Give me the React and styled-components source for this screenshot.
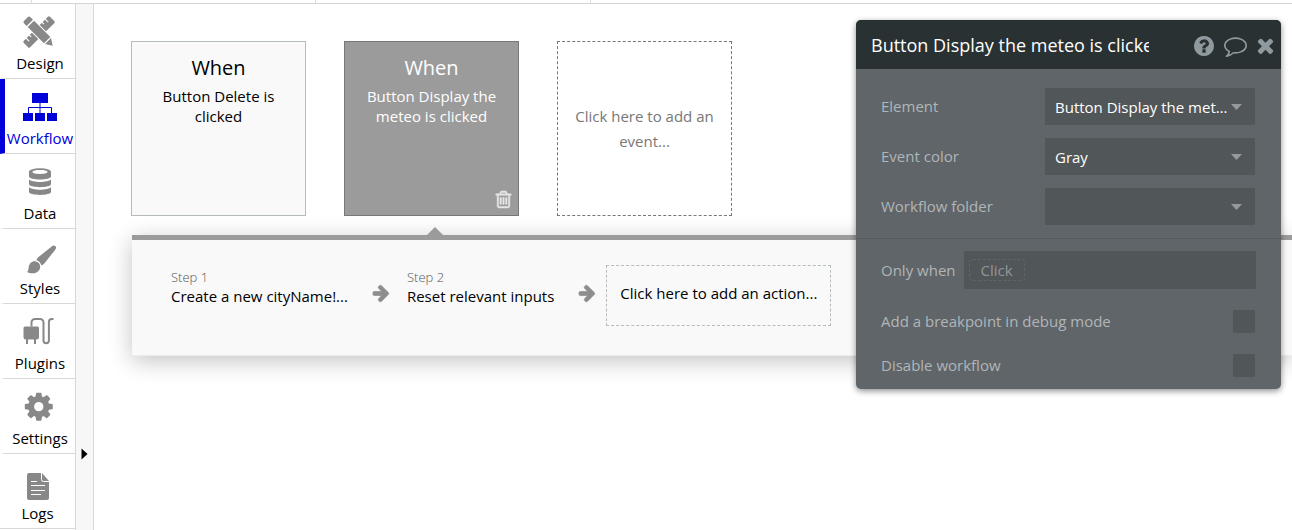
import React, { useState } from "react";
import styled, { createGlobalStyle, css } from "styled-components";

const GlobalStyle = createGlobalStyle`
  *, *::before, *::after { box-sizing: border-box; }
  body {
    margin: 0;
    background: #fff;
    color: #000;
    font-family: "Open Sans", "Noto Sans", sans-serif;
    font-size: 15px;
    line-height: 20px;
    overflow-x: hidden;
  }
  button, input, select { font: inherit; color: inherit; }
  svg { display: block; }
`;

/* ---------- icons ---------- */

const NavSvg = styled.svg`
  width: 40px;
  height: 36px;
  fill: currentColor;
`;

const DesignIcon = () => (
  <NavSvg viewBox="0 0 40 36" aria-hidden="true">
    <g transform="translate(19 16) rotate(-45)">
      <path d="M-17 -4.5h11.5v9h-11.5a1.5 1.5 0 0 1-1.5-1.5v-6a1.5 1.5 0 0 1 1.5-1.5z" />
      <path d="M5.5 -4.5h11.5a1.5 1.5 0 0 1 1.5 1.5v6a1.5 1.5 0 0 1-1.5 1.5h-11.5z" />
      <path
        d="M-13.500 -5v4.500M-9 -5v3M9 -5v3M13.500 -5v4.500"
        stroke="#fff"
        strokeWidth="1.1"
      />
    </g>
    <g transform="translate(19 16) rotate(45)">
      <path d="M-16.500 -4.500h3.500v9h-3.500a2 2 0 0 1-2-2v-5a2 2 0 0 1 2-2z" />
      <path d="M-11.500 -4.500h23v9h-23z" />
      <path d="M12.800 -4.200l6.500 4.200-6.500 4.200z" />
    </g>
  </NavSvg>
);

const WorkflowIcon = () => (
  <NavSvg viewBox="0 0 40 36" aria-hidden="true">
    <path d="M12 2h16v10H12zM3 22h10v8H3zM15 22h10v8H15zM27 22h10v8H27z" />
    <path d="M20 12v10M8.500 22v-5.500h23V22" fill="none" stroke="currentColor" />
  </NavSvg>
);

const DataIcon = () => (
  <NavSvg viewBox="0 0 40 36" aria-hidden="true">
    <path
      fillRule="evenodd"
      d="M9 6c0-5 22-5 22 0v4.500c0 4-22 4-22 0zM12.500 6c0 2.600 15 2.600 15 0s-15-2.600-15 0z"
    />
    <path d="M9 13.500c3 3.300 19 3.300 22 0v4.500c0 4.200-22 4.200-22 0z" />
    <path d="M9 21.200c3 3.300 19 3.300 22 0v4.600c0 4.200-22 4.200-22 0z" />
  </NavSvg>
);

const StylesIcon = () => (
  <NavSvg viewBox="0 0 40 36" aria-hidden="true">
    <path d="M35.500 5.200c1 1 .6 2.300-.3 3.500L24.500 22.300c-1 1.200-2 1.800-3.200 2-.8-2.600-2.400-4.200-4.800-5 .2-1.300.9-2.300 2-3.300L32 5.300c1.200-1 2.500-1.100 3.500-.1z" />
    <path d="M15.200 20.300c3.200.5 5 2.600 5 5.400 0 4-3.600 6.600-7.700 6.600-2.200 0-4.200-.5-5.500-1.400 1.600-.9 1.300-2.700 1.700-4.900.6-3.600 3-6 6.500-5.700z" />
  </NavSvg>
);

const PluginsIcon = () => (
  <NavSvg viewBox="0 0 40 36" aria-hidden="true">
    <path d="M5 10.500h12.500a1.500 1.500 0 0 1 1.500 1.500v9a2.500 2.500 0 0 1-2.500 2.500H16V28h-2v-4.500H8V28H6v-4.500a2.500 2.500 0 0 1-2.500-2.500v-9a1.500 1.500 0 0 1 1.500-1.500z" />
    <path
      d="M11.500 10.500V6.500a3.500 3.500 0 0 1 3.500-3.500h5a3.500 3.500 0 0 1 3.500 3.500v18a2.700 2.700 0 0 0 5.400 0V6a3 3 0 0 1 3-3h1.600"
      fill="none"
      stroke="currentColor"
      strokeWidth="2"
    />
  </NavSvg>
);

const SettingsIcon = () => (
  <NavSvg viewBox="0 0 40 36" aria-hidden="true">
    <g transform="translate(4.800 4) scale(0.0182)">
      <path
        fillRule="evenodd"
        d="M1024 640q0 106-75 181t-181 75-181-75-75-181 75-181 181-75 181 75 75 181zm512-109v222q0 12-8 23t-20 13l-185 28q-19 54-39 91 35 50 107 138 10 12 10 25t-9 23q-27 37-99 108t-94 71q-12 0-26-9l-138-108q-44 23-91 38-16 136-29 186-7 28-36 28h-222q-14 0-24.500-8.500t-11.500-21.500l-28-184q-49-16-90-37l-141 107q-10 9-25 9-14 0-25-11-126-114-165-168-7-10-7-23 0-12 8-23 15-21 51-66.500t54-70.500q-27-50-41-99l-183-27q-13-2-21-12.500t-8-23.500v-222q0-12 8-23t19-13l186-28q14-46 39-92-40-57-107-138-10-12-10-24 0-10 9-23 26-36 98.500-107.500t94.500-71.500q13 0 26 10l138 107q44-23 91-38 16-136 29-186 7-28 36-28h222q14 0 24.500 8.500t11.500 21.500l28 184q49 16 90 37l142-107q9-9 24-9 13 0 25 10 129 119 165 170 7 8 7 22 0 12-8 23-15 21-51 66.500t-54 70.500q26 50 41 98l183 28q13 2 21 12.500t8 23.500z"
      />
    </g>
  </NavSvg>
);

const LogsIcon = () => (
  <NavSvg viewBox="0 0 40 36" aria-hidden="true">
    <path d="M11 7h13l7 8v17a2 2 0 0 1-2 2H11a2 2 0 0 1-2-2V9a2 2 0 0 1 2-2z" />
    <path
      d="M23.500 7v6.500a2 2 0 0 0 2 2H31M13 15.500h6M13 19.500h14M13 24.500h14M13 28.500h10"
      fill="none"
      stroke="#fff"
    />
  </NavSvg>
);

const GlyphSvg = styled.svg`
  width: ${(p) => p.$size}px;
  height: ${(p) => p.$size}px;
  fill: currentColor;
  stroke: currentColor;
  stroke-width: ${(p) => p.$weight || 0};
  overflow: visible;
  flex: none;
`;

const glyphs = {
  help: "M1024 1376v-192q0-14-9-23t-23-9h-192q-14 0-23 9t-9 23v192q0 14 9 23t23 9h192q14 0 23-9t9-23zm256-672q0-88-55.5-163t-138.5-116-170-41q-243 0-371 213-15 24 8 42l132 100q7 6 19 6 16 0 25-12 53-68 86-92 34-24 86-24 48 0 85.500 26t37.500 59q0 38-20 61t-68 45q-63 28-115.500 86.500t-52.500 125.500v36q0 14 9 23t23 9h192q14 0 23-9t9-23q0-19 21.500-49.500t54.500-49.500q32-18 49-28.500t46-35 44.500-48 28-60.500 12.500-81zm384 192q0 209-103 385.500t-279.500 279.500-385.500 103-385.500-103-279.500-279.500-103-385.500 103-385.500 279.500-279.500 385.500-103 385.500 103 279.500 279.500 103 385.500z",
  comment:
    "M896 384q-204 0-381.500 69.500t-282 187.500-104.500 255q0 112 71.500 213.500t201.500 175.500l87 50-27 96q-24 91-70 172 152-63 275-171l43-38 57 6q69 8 130 8 204 0 381.500-69.500t282-187.500 104.500-255-104.500-255-282-187.500-381.500-69.500zm896 512q0 174-120 321.500t-326 233-450 85.500q-70 0-145-8-198 175-460 242-49 14-114 22h-5q-15 0-27-10.500t-16-27.500v-1q-3-4-.5-12t2-10 4.500-9.500l6-9 7-8.500 8-9q7-8 31-34.500t34.500-38 31-39.500 32.500-51 27-59 26-76q-157-89-247.500-220t-90.500-281q0-174 120-321.500t326-233 450-85.500 450 85.500 326 233 120 321.500z",
  close:
    "M1490 1322q0 40-28 68l-136 136q-28 28-68 28t-68-28l-294-294-294 294q-28 28-68 28t-68-28l-136-136q-28-28-28-68t28-68l294-294-294-294q-28-28-28-68t28-68l136-136q28-28 68-28t68 28l294 294 294-294q28-28 68-28t68 28l136 136q28 28 28 68t-28 68l-294 294 294 294q28 28 28 68z",
  trash:
    "M704 736v576q0 14-9 23t-23 9h-64q-14 0-23-9t-9-23v-576q0-14 9-23t23-9h64q14 0 23 9t9 23zm256 0v576q0 14-9 23t-23 9h-64q-14 0-23-9t-9-23v-576q0-14 9-23t23-9h64q14 0 23 9t9 23zm256 0v576q0 14-9 23t-23 9h-64q-14 0-23-9t-9-23v-576q0-14 9-23t23-9h64q14 0 23 9t9 23zm128 724v-948h-896v948q0 22 7 40.500t14.500 27 10.500 8.500h832q3 0 10.500-8.500t14.500-27 7-40.500zm-672-1076h448l-48-117q-7-9-17-11h-317q-10 2-17 11zm928 32v64q0 14-9 23t-23 9h-96v948q0 83-47 143.500t-113 60.500h-832q-66 0-113-58.500t-47-141.500v-952h-96q-14 0-23-9t-9-23v-64q0-14 9-23t23-9h309l70-167q15-37 54-63t79-26h320q40 0 79 26t54 63l70 167h309q14 0 23 9t9 23z",
  arrow:
    "M1600 960q0 54-37 91l-651 651q-39 37-91 37-51 0-90-37l-75-75q-38-38-38-91t38-91l293-293h-704q-52 0-84.500-37.500t-32.500-90.500v-128q0-53 32.500-90.500t84.500-37.500h704l-293-294q-38-36-38-90t38-90l75-75q38-38 90-38 53 0 91 38l651 651q37 35 37 90z",
};

const boxes = {
  help: "128 128 1536 1536",
  comment: "0 0 1792 1792",
  close: "302 238 1188 1316",
  trash: "192 128 1408 1536",
  arrow: "64 160 1536 1600",
};

const Glyph = ({ name, size, weight }) => (
  <GlyphSvg viewBox={boxes[name]} $size={size} $weight={weight} aria-hidden="true">
    <path d={glyphs[name]} />
  </GlyphSvg>
);

/* ---------- page frame ---------- */

const Page = styled.div`
  position: relative;
  display: flex;
  flex-direction: column;
  min-height: 100vh;
`;

const TopStrip = styled.header`
  display: flex;
  height: 4px;
  border-bottom: 1px solid #d5d5d5;
`;

const TopCell = styled.div`
  width: ${(p) => p.$width}px;
  border-right: 1px solid #dedede;
`;

const Columns = styled.div`
  display: flex;
  flex: 1;
`;

const Nav = styled.nav`
  flex: none;
  width: 76px;
  border-right: 1px solid #d8d8d8;
`;

const NavLink = styled.a`
  display: flex;
  flex-direction: column;
  align-items: center;
  height: 75px;
  padding-top: 12px;
  border-bottom: 1px solid #d8d8d8;
  border-left: ${(p) => (p.$flush ? "0" : "5px")} solid transparent;
  color: #000;
  text-decoration: none;
  white-space: nowrap;

  ${NavSvg} { color: #888; }

  ${(p) =>
    p.$active &&
    css`
      border-left-color: #0000d9;
      color: #0000d9;
      ${NavSvg} { color: #0000d9; }
    `}
`;

const NavText = styled.span`
  line-height: 22px;
`;

const Gutter = styled.div`
  display: flex;
  flex-direction: column;
  justify-content: flex-end;
  align-items: center;
  flex: none;
  width: 18px;
  padding-bottom: 70px;
  background: #f7f7f7;
  border-right: 1px solid #d8d8d8;
`;

const GutterButton = styled.button`
  padding: 0;
  border: 0;
  background: none;
`;

const Main = styled.main`
  flex: 1;
  min-width: 0;
  padding: 37px 0 0 37px;
  overflow: hidden;
`;

/* ---------- events ---------- */

const Events = styled.div`
  display: flex;
  gap: 38px;
`;

const EventCard = styled.section`
  display: flex;
  flex-direction: column;
  flex: none;
  width: 175px;
  height: 175px;
  padding: 12px 10px 7px;
  text-align: center;
  color: ${(p) => (p.$selected ? "#fff" : "#000")};
  background: ${(p) => (p.$selected ? "#9b9b9b" : "#f9f9f9")};
  border: 1px solid ${(p) => (p.$selected ? "#777" : "#b5bcc0")};
`;

const EventTitle = styled.h2`
  margin: 0 0 4px;
  font-size: 20px;
  line-height: 28px;
  font-weight: 400;
`;

const EventText = styled.p`
  margin: 0;
  padding: 0 10px;
  font-size: 15px;
`;

const TrashButton = styled.button`
  align-self: flex-end;
  margin-top: auto;
  margin-right: -4px;
  padding: 0;
  border: 0;
  background: none;
  color: #e6e6e6;
`;

const AddEvent = styled.button`
  flex: none;
  width: 175px;
  height: 175px;
  padding: 0 16px;
  border: 1px dashed #777;
  background: none;
  color: #777;
  line-height: 25px;
`;

/* ---------- actions ---------- */

const Actions = styled.section`
  position: relative;
  display: flex;
  align-items: flex-start;
  margin: 19px 0 0 1px;
  height: 121px;
  padding: 25px 32px;
  background: #f9f9f9;
  border-top: 5px solid #9b9b9b;
  border-bottom: 1px solid #ececec;
  box-shadow: 0 5px 22px rgba(0, 0, 0, 0.24);

  &::before {
    content: "";
    position: absolute;
    left: 295px;
    bottom: 100%;
    margin-bottom: 5px;
    border: 8px solid transparent;
    border-top: 0;
    border-bottom-color: #9b9b9b;
  }
`;

const Step = styled.div`
  flex: none;
  padding: 3px 0 0 7px;
`;

const StepNumber = styled.div`
  color: #555;
  font-size: 13px;
  line-height: 18px;
  font-weight: 300;
`;

const StepName = styled.div`
  white-space: nowrap;
`;

const StepArrow = styled.div`
  flex: none;
  padding: 20px 11px 0 24px;
  color: #8d8d8d;
`;

const AddAction = styled.button`
  flex: none;
  height: 61px;
  padding: 0 13px 6px;
  border: 1px dashed #b5bcc0;
  background: none;
  white-space: nowrap;
`;

/* ---------- property editor ---------- */

const Editor = styled.aside`
  position: absolute;
  top: 20px;
  right: 11px;
  width: 425px;
  border-radius: 5px;
  overflow: hidden;
  background: #5f6568;
  color: #b1b5b8;
  box-shadow: 0 2px 6px rgba(0, 0, 0, 0.45);
`;

const EditorHeader = styled.header`
  display: flex;
  align-items: center;
  height: 49px;
  padding: 2px 7px 0 15px;
  background: #293133;
  color: #8f9a9e;
`;

const TitleInput = styled.input`
  width: 278px;
  height: 30px;
  margin-right: auto;
  padding: 0 0 2px;
  border: 0;
  outline: 0;
  background: none;
  color: #fff;
  font-size: 18px;
`;

const HeaderIcons = styled.div`
  display: flex;
  align-items: center;
  gap: 10px;
`;

const IconButton = styled.button`
  padding: 0;
  border: 0;
  background: none;
`;

const Group = styled.div`
  display: flex;
  flex-direction: column;
  gap: ${(p) => p.$gap}px;
  padding: ${(p) => p.$pad};

  & + & { border-top: 1px solid #565b5e; }
`;

const Field = styled.div`
  display: flex;
  align-items: center;
  justify-content: space-between;
`;

const FieldLabel = styled.label`
  padding-bottom: 2px;
`;

const SelectBox = styled.div`
  position: relative;
  width: 210px;
`;

const Select = styled.select`
  appearance: none;
  display: block;
  width: 100%;
  height: 37px;
  padding: 1px 27px 0 10px;
  border: 0;
  border-radius: 1px;
  background: #515659;
  color: #fff;
  text-overflow: ellipsis;
`;

const Caret = styled.svg`
  position: absolute;
  right: 13px;
  top: 16px;
  width: 11px;
  height: 6px;
  fill: #96999b;
  pointer-events: none;
`;

const Expression = styled.div`
  display: flex;
  align-items: center;
  flex: 1;
  height: 38px;
  margin: 0 -1px 0 8px;
  padding: 0 5px;
  border-radius: 1px;
  background: #515659;
`;

const ExpressionChip = styled.button`
  height: 22px;
  padding: 0 11px;
  border: 1px dashed #5f6568;
  border-radius: 4px;
  background: none;
  color: #929597;
`;

const Check = styled.input`
  appearance: none;
  width: 22px;
  height: 23px;
  margin: 0;
  border-radius: 1px;
  background: #515659;

  &:checked { box-shadow: inset 0 0 0 6px #515659, inset 0 0 0 11px #fff; }
`;

const navItems = [
  { label: "Design", Icon: DesignIcon },
  { label: "Workflow", Icon: WorkflowIcon, active: true },
  { label: "Data", Icon: DataIcon },
  { label: "Styles", Icon: StylesIcon },
  { label: "Plugins", Icon: PluginsIcon },
  { label: "Settings", Icon: SettingsIcon },
  { label: "Logs", Icon: LogsIcon, flush: true },
];

const selects = [
  { id: "element", label: "Element", value: "Button Display the meteo" },
  { id: "color", label: "Event color", value: "Gray" },
  { id: "folder", label: "Workflow folder", value: "" },
];

const PropertyEditor = () => {
  const [title, setTitle] = useState("Button Display the meteo is clicked");
  return (
    <Editor>
      <EditorHeader>
        <TitleInput
          aria-label="Event name"
          value={title}
          onChange={(e) => setTitle(e.target.value)}
        />
        <HeaderIcons>
          <IconButton aria-label="Help"><Glyph name="help" size={20} /></IconButton>
          <IconButton aria-label="Comment"><Glyph name="comment" size={23} /></IconButton>
          <IconButton aria-label="Close"><Glyph name="close" size={17} /></IconButton>
        </HeaderIcons>
      </EditorHeader>
      <Group $gap={13} $pad="19px 26px 13px 25px">
        {selects.map(({ id, label, value }) => (
          <Field key={id}>
            <FieldLabel htmlFor={id}>{label}</FieldLabel>
            <SelectBox>
              <Select id={id} defaultValue={value}>
                <option value={value}>{value}</option>
              </Select>
              <Caret viewBox="0 0 11 6" aria-hidden="true"><path d="M0 0h11L5.500 6z" /></Caret>
            </SelectBox>
          </Field>
        ))}
      </Group>
      <Group $gap={21} $pad="12px 26px 12px 25px">
        <Field>
          <span id="only-when">Only when</span>
          <Expression role="group" aria-labelledby="only-when">
            <ExpressionChip>Click</ExpressionChip>
          </Expression>
        </Field>
        <Field>
          <FieldLabel htmlFor="breakpoint">Add a breakpoint in debug mode</FieldLabel>
          <Check id="breakpoint" type="checkbox" />
        </Field>
        <Field>
          <FieldLabel htmlFor="disable">Disable workflow</FieldLabel>
          <Check id="disable" type="checkbox" />
        </Field>
      </Group>
    </Editor>
  );
};

export default function App() {
  return (
    <Page>
      <GlobalStyle />
      <TopStrip>
        <TopCell $width={32} />
        <TopCell $width={284} />
        <TopCell $width={275} />
      </TopStrip>
      <Columns>
        <Nav>
          {navItems.map(({ label, Icon, active, flush }) => (
            <NavLink key={label} href="#" $active={active} $flush={flush}>
              <Icon />
              <NavText>{label}</NavText>
            </NavLink>
          ))}
        </Nav>
        <Gutter>
          <GutterButton aria-label="Expand">
            <svg width="7" height="12" viewBox="0 0 7 12"><path d="M0.500 0.500v11l6-5.500z" /></svg>
          </GutterButton>
        </Gutter>
        <Main>
          <Events>
            <EventCard>
              <EventTitle>When</EventTitle>
              <EventText>Button Delete is clicked</EventText>
            </EventCard>
            <EventCard $selected>
              <EventTitle>When</EventTitle>
              <EventText>Button Display the meteo is clicked</EventText>
              <TrashButton aria-label="Delete event">
                <Glyph name="trash" size={17} weight={45} />
              </TrashButton>
            </EventCard>
            <AddEvent>Click here to add an event...</AddEvent>
          </Events>
          <Actions>
            <Step>
              <StepNumber>Step 1</StepNumber>
              <StepName>Create a new cityName!...</StepName>
            </Step>
            <StepArrow><Glyph name="arrow" size={17} weight={70} /></StepArrow>
            <Step>
              <StepNumber>Step 2</StepNumber>
              <StepName>Reset relevant inputs</StepName>
            </Step>
            <StepArrow><Glyph name="arrow" size={17} weight={70} /></StepArrow>
            <AddAction>Click here to add an action...</AddAction>
          </Actions>
        </Main>
      </Columns>
      <PropertyEditor />
    </Page>
  );
}
